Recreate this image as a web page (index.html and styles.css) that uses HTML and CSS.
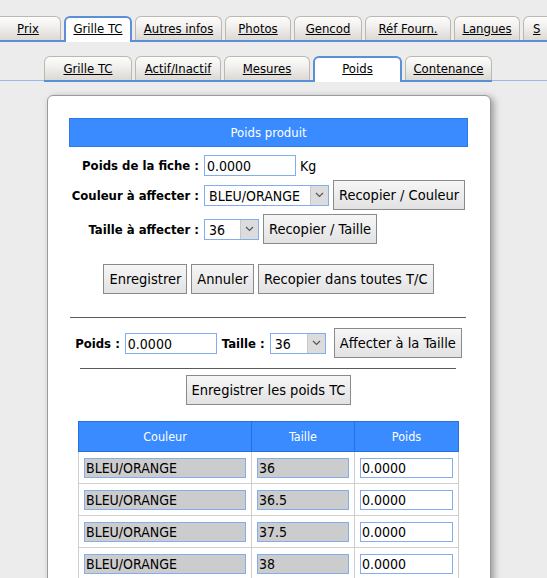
FILE: index.html
```html
<!DOCTYPE html>
<html lang="fr">
<head>
<meta charset="utf-8">
<title>Poids</title>
<link rel="stylesheet" href="styles.css">
</head>
<body>
<div class="tabs1">
  <a class="tab t1a">Prix</a>
  <a class="tab active t1b">Grille TC</a>
  <a class="tab t1c">Autres infos</a>
  <a class="tab t1d">Photos</a>
  <a class="tab t1e">Gencod</a>
  <a class="tab t1f">Réf Fourn.</a>
  <a class="tab t1d">Langues</a>
  <a class="tab t1g">S</a>
</div>
<div class="tabs2">
  <div class="tablist2">
    <a class="tab t2a">Grille TC</a>
    <a class="tab t2b">Actif/Inactif</a>
    <a class="tab t2c">Mesures</a>
    <a class="tab active t2d">Poids</a>
    <a class="tab t2e">Contenance</a>
  </div>
</div>

<div class="panel">
  <div class="panel-head">Poids produit</div>
  <div class="frow r1">
    <label class="lbl">Poids de la fiche :</label>
    <input class="inp w92" value="0.0000">
    <span class="unit">Kg</span>
  </div>
  <div class="frow r2">
    <label class="lbl">Couleur à affecter :</label>
    <div class="sel w125"><span class="sel-val">BLEU/ORANGE</span><span class="sel-arr"><svg width="9" height="6" viewBox="0 0 9 6"><path d="M1 1l3.5 3.5L8 1" fill="none" stroke="#555" stroke-width="1.2"/></svg></span></div>
    <button class="btn">Recopier / Couleur</button>
  </div>
  <div class="frow r2">
    <label class="lbl">Taille à affecter :</label>
    <div class="sel w55"><span class="sel-val">36</span><span class="sel-arr"><svg width="9" height="6" viewBox="0 0 9 6"><path d="M1 1l3.5 3.5L8 1" fill="none" stroke="#555" stroke-width="1.2"/></svg></span></div>
    <button class="btn">Recopier / Taille</button>
  </div>
  <div class="actions">
    <button class="btn">Enregistrer</button>
    <button class="btn">Annuler</button>
    <button class="btn">Recopier dans toutes T/C</button>
  </div>
  <div class="rule rule1"></div>
  <div class="line2">
    <label class="lbl2">Poids :</label>
    <input class="inp w92" value="0.0000">
    <label class="lbl2">Taille :</label>
    <div class="sel w56"><span class="sel-val">36</span><span class="sel-arr"><svg width="9" height="6" viewBox="0 0 9 6"><path d="M1 1l3.5 3.5L8 1" fill="none" stroke="#555" stroke-width="1.2"/></svg></span></div>
    <button class="btn btn-aff">Affecter à la Taille</button>
  </div>
  <div class="rule rule2"></div>
  <div class="save">
    <button class="btn">Enregistrer les poids TC</button>
  </div>
  <table class="grid">
    <thead>
      <tr><th class="c1">Couleur</th><th class="c2">Taille</th><th class="c3">Poids</th></tr>
    </thead>
    <tbody>
      <tr><td><input class="ro ro1" value="BLEU/ORANGE" readonly></td><td><input class="ro ro2" value="36" readonly></td><td><input class="pw" value="0.0000"></td></tr>
      <tr><td><input class="ro ro1" value="BLEU/ORANGE" readonly></td><td><input class="ro ro2" value="36.5" readonly></td><td><input class="pw" value="0.0000"></td></tr>
      <tr><td><input class="ro ro1" value="BLEU/ORANGE" readonly></td><td><input class="ro ro2" value="37.5" readonly></td><td><input class="pw" value="0.0000"></td></tr>
      <tr><td><input class="ro ro1" value="BLEU/ORANGE" readonly></td><td><input class="ro ro2" value="38" readonly></td><td><input class="pw" value="0.0000"></td></tr>
    </tbody>
  </table>
</div>
</body>
</html>
```
FILE: styles.css
```css
html, body {
  margin: 0;
  padding: 0;
}
body {
  background: #ececec;
  font-family: "DejaVu Sans Condensed", "DejaVu Sans", sans-serif;
  font-stretch: condensed;
  font-size: 14px;
  color: #000;
  overflow: hidden;
  width: 547px;
  height: 578px;
}

/* ---------- tabs ---------- */
.tabs1 {
  display: flex;
  align-items: flex-end;
  gap: 3px;
  margin-top: 16px;
  border-bottom: 2px solid #5b8fd8;
  height: 24px;
  margin-left: -5px;
  white-space: nowrap;
}
.tab {
  box-sizing: border-box;
  flex: none;
  height: 24px;
  line-height: 23px;
  text-align: center;
  font-size: 13px;
  color: #000;
  text-decoration: underline;
  background: linear-gradient(#fcfcfb, #f0efed 45%, #dcd9d4);
  border: 1px solid #bcb8b0;
  border-bottom: none;
  border-radius: 6px 6px 0 0;
  overflow: hidden;
}
.tab.active {
  height: 26px;
  margin-bottom: -2px;
  background: #fff;
  border: 2px solid #5b8fd8;
  border-bottom: none;
  line-height: 22px;
}
.t1a { width: 66px; }
.t1b { width: 68px; }
.t1c { width: 87px; }
.t1d { width: 66px; }
.t1e { width: 68px; }
.t1f { width: 86px; }
.t1g { width: 40px; text-align: left; padding-left: 9px; }

.tabs2 {
  margin-top: 14px;
  border-bottom: 1px solid #9cb9e6;
  height: 24px;
}
.tablist2 {
  display: flex;
  align-items: flex-end;
  gap: 3px;
  margin-left: 44px;
  width: max-content;
  height: 24px;
  border-bottom: 2px solid #5b8fd8;
}
.t2a { width: 88px; }
.t2b { width: 86px; }
.t2c { width: 86px; }
.t2d { width: 89px; }
.t2e { width: 87px; }

/* ---------- panel ---------- */
.panel {
  box-sizing: border-box;
  margin: 14px 0 0 47px;
  width: 444px;
  height: 510px;
  background: #fff;
  border: 1px solid #9a9a9a;
  border-radius: 6px;
  box-shadow: 3px 2px 7px rgba(0, 0, 0, 0.35);
  padding: 22px 22px 0 21px;
}
.panel-head {
  height: 29px;
  box-sizing: border-box;
  background: #3a8bff;
  border: 1px solid #2b79e6;
  color: #fff;
  font-size: 13px;
  line-height: 27px;
  text-align: center;
}

.frow {
  display: flex;
  align-items: center;
}
.r1 { height: 25px; margin-top: 6px; }
.r2 { height: 34px; }
.lbl {
  width: 130px;
  text-align: right;
  font-weight: bold;
  font-size: 13px;
  margin-right: 5px;
  flex: none;
}
.unit { margin-left: 4px; font-size: 14px; }

.inp {
  box-sizing: border-box;
  height: 21px;
  border: 1px solid #82aef0;
  padding: 1px 2px 0;
  font: inherit;
  font-size: 14px;
  color: #000;
  background: #fff;
  outline: none;
  margin: 0;
}
.w92 { width: 92px; }

.sel {
  box-sizing: border-box;
  display: flex;
  height: 21px;
  border: 1px solid #82aef0;
  background: #fff;
  flex: none;
}
.w125 { width: 125px; }
.w55 { width: 55px; }
.w56 { width: 56px; }
.sel-val {
  flex: 1;
  padding: 1px 0 0 4px;
  line-height: 18px;
  font-size: 14px;
}
.sel-arr {
  width: 17px;
  background: #dcdcdc;
  border-left: 1px solid #c8c8c8;
  display: flex;
  align-items: center;
  justify-content: center;
}

.btn {
  box-sizing: border-box;
  height: 30px;
  padding: 0 5px;
  margin: 0 0 0 4px;
  border: 1px solid #8a8a8a;
  border-radius: 0;
  background: linear-gradient(#f6f6f6, #e2e2e2);
  font: inherit;
  font-size: 14.5px;
  color: #000;
  flex: none;
}

.actions {
  display: flex;
  justify-content: center;
  gap: 4px;
  margin-top: 18px;
}
.actions .btn { margin: 0; }

.rule {
  height: 1px;
  background: #5a5a5a;
}
.rule1 { margin: 23px 2px 0 1px; }
.rule2 { margin: 0 12px 0 11px; }

.line2 {
  display: flex;
  align-items: center;
  justify-content: center;
  height: 30px;
  margin: 10px 0 10px;
}
.lbl2 {
  font-weight: bold;
  font-size: 13px;
  margin: 0 5px 0 0;
}
.line2 .inp { margin-right: 5px; }
.btn-aff { margin-left: 8px; }

.save {
  display: flex;
  justify-content: center;
  margin-top: 6px;
}
.save .btn { margin: 0; }

.grid {
  border-collapse: collapse;
  margin: 16px auto 0;
  width: 380px;
  table-layout: fixed;
}
.grid th {
  height: 30px;
  box-sizing: border-box;
  background: #3a8bff;
  border: 1px solid #2471de;
  color: #fff;
  font-weight: normal;
  font-size: 12.5px;
  padding: 0;
}
.c1 { width: 173px; }
.c2 { width: 103px; }
.c3 { width: 104px; }
.grid td {
  height: 32px;
  box-sizing: border-box;
  border: 1px solid #cfcfcf;
  padding: 0 5px;
}
.ro, .pw {
  box-sizing: border-box;
  display: block;
  height: 20px;
  border: 1px solid #82aef0;
  font: inherit;
  font-size: 14px;
  color: #000;
  padding: 1px 1px 0;
  margin: 0;
  outline: none;
  width: 100%;
}
.ro { background: #cccccc; }
.pw { background: #fff; }
```
